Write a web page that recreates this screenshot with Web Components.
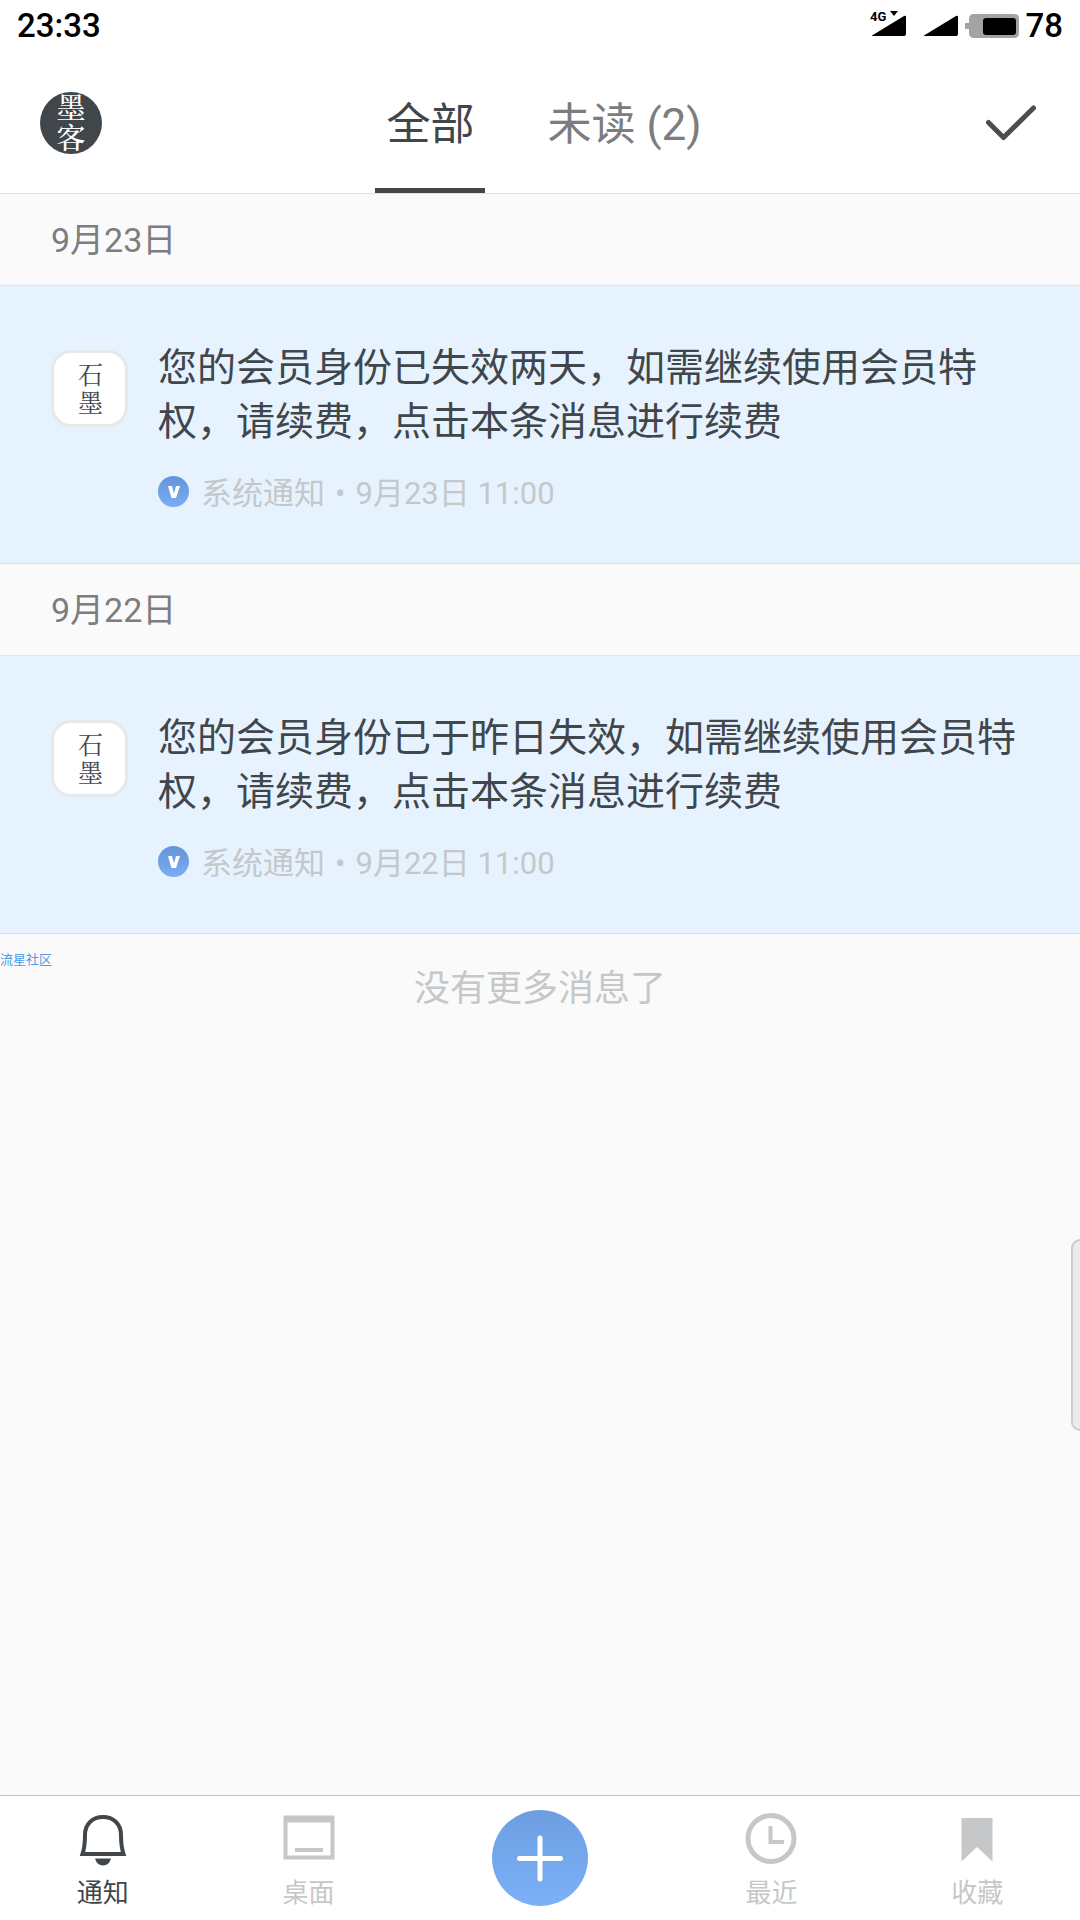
<!DOCTYPE html>
<html lang="zh-CN">
<head>
<meta charset="utf-8">
<meta name="viewport" content="width=device-width, initial-scale=1">
<title>通知</title>
<style>
  html, body { margin: 0; }
  body {
    --ink: #41464b;
    --mute: #7b7d80;
    --faint: #c5c7c9;
    --line: #e1e4e6;
    --serif: "Noto Serif CJK SC", "Liberation Serif", "Noto Sans CJK SC", serif;
    font-family: Roboto, "Noto Sans CJK SC", sans-serif;
    color: var(--ink);
    background: #fafafa;
  }
</style>
</head>
<body>
<notice-app></notice-app>
<script>
const define = (name, html) => {
  const template = document.createElement('template');
  template.innerHTML = html;
  customElements.define(name, class extends HTMLElement {
    constructor() {
      super();
      this.attachShadow({ mode: 'open' }).append(template.content.cloneNode(true));
    }
  });
};

define('status-bar', `
<style>
  :host { display: flex; justify-content: space-between; align-items: center; height: 52px; padding: 0 17px; color: #000; font-size: 33px; font-weight: 500; line-height: 40px; }
  .right { display: flex; align-items: center; gap: 5px; }
  svg { display: block; }
  text { font: 700 13px Roboto, sans-serif; }
</style>
<time>23:33</time>
<div class="right">
  <svg width="150" height="42" viewBox="0 -6 150 42" role="img" aria-label="信号与电量">
    <text x="0" y="10">4G</text>
    <path d="M20 0h8l-4 5z"/>
    <path d="M2 24.500 34 5q2-1 2 1v17q0 2-2 2H3q-2 0-1-.5z"/>
    <path d="M54 24.500 86 5q2-1 2 1v17q0 2-2 2H55q-2 0-1-.5z"/>
    <path fill="#a3a3a3" d="M104 3h40q5 0 5 5v14q0 5-5 5h-40q-5 0-5-5v-4h-4v-6h4V8q0-5 5-5z"/>
    <rect x="113" y="7" width="33" height="17" rx="3"/>
  </svg>
  <span>78</span>
</div>`);

define('user-avatar', `
<style>
  :host { display: block; }
  button { display: flex; flex-direction: column; align-items: center; justify-content: center; width: 62px; height: 62px; padding: 0 0 2px; border: 0; border-radius: 50%; background: #41464b; color: #fff; font: 500 29px/30px var(--serif); }
  span { display: block; width: 1em; }
</style>
<button aria-label="个人中心"><span>墨客</span></button>`);

define('tab-item', `
<style>
  :host { display: flex; color: var(--mute); }
  button { padding: 10px 11px 0; border: 0; border-bottom: 5px solid transparent; background: none; color: inherit; font: inherit; }
  :host([active]) { color: var(--ink); }
  :host([active]) button { border-color: currentColor; }
</style>
<button><slot></slot></button>`);

define('top-bar', `
<style>
  :host { display: flex; justify-content: space-between; align-items: center; height: 141px; padding: 0 40px; border-bottom: 1px solid var(--line); }
  nav { display: flex; align-self: stretch; gap: 51px; font-size: 44px; line-height: 52px; }
  .done { display: block; padding: 0; border: 0; background: none; color: #4a4d52; }
  svg { display: block; }
</style>
<user-avatar></user-avatar>
<nav>
  <tab-item active>全部</tab-item>
  <tab-item>未读 (2)</tab-item>
</nav>
<button class="done" aria-label="全部已读">
  <svg width="54" height="38" viewBox="0 0 54 38" fill="none" stroke="currentColor" stroke-width="5" stroke-linecap="round" stroke-linejoin="round"><path d="M2.500 18.500 17.500 33.500 47.500 4"/></svg>
</button>`);

define('day-heading', `
<style>
  :host { display: block; border-bottom: 1px solid var(--line); }
  h2 { margin: 0; padding: 24px 51px 23px; color: var(--mute); font-size: 34px; font-weight: 400; line-height: 44px; }
</style>
<h2><slot></slot></h2>`);

define('app-mark', `
<style>
  :host { display: flex; flex: none; justify-content: center; align-items: center; box-sizing: border-box; width: 77px; height: 77px; padding: 0 0 4px 2px; border: 3px solid #e6e8ea; border-radius: 20px; background: #fff; font: 25px/28px var(--serif); }
  span { width: 1em; }
</style>
<span>石墨</span>`);

define('notice-item', `
<style>
  :host { display: block; border-bottom: 1px solid #d8e1e8; background: #e6f3ff; }
  a { display: flex; align-items: flex-start; gap: 30px; padding: 55px 51px 49px; color: inherit; text-decoration: none; }
  app-mark { margin-top: 9px; }
  .body { flex: 1; min-width: 0; }
  p { margin: 0; font-size: 39px; line-height: 54px; }
  .meta { display: flex; align-items: flex-start; gap: 12px; margin-top: 25px; color: var(--faint); font-size: 31px; line-height: 40px; }
  svg { display: block; flex: none; margin-top: 2px; }
  ::slotted([slot]) { display: flex; gap: 10px; }
</style>
<a href="#">
  <app-mark></app-mark>
  <div class="body">
    <p><slot></slot></p>
    <div class="meta">
      <svg width="31" height="31" viewBox="0 0 31 31" aria-hidden="true">
        <defs><linearGradient id="g" x2="0" y2="1"><stop stop-color="#6394da"/><stop offset="1" stop-color="#79adf4"/></linearGradient></defs>
        <circle cx="15.500" cy="15.500" r="15.500" fill="url(#g)"/>
        <path fill="#fff" d="M10 10h4l2 7.500 2-7.500h4l-4 12h-4.500z"/>
      </svg>
      <slot name="meta"></slot>
    </div>
  </div>
</a>`);

define('nav-item', `
<style>
  :host { display: block; flex: 4; color: var(--faint); }
  :host([active]) { color: #41464b; }
  a { display: flex; flex-direction: column; align-items: center; gap: 10px; padding-top: 5px; color: inherit; text-decoration: none; font-size: 26px; line-height: 32px; }
  ::slotted(svg) { display: block; }
</style>
<a href="#"><slot name="icon"></slot><slot></slot></a>`);

define('bottom-nav', `
<style>
  :host { display: block; border-top: 1px solid #bfc3c3; background: #fff; }
  nav { display: flex; align-items: center; height: 124px; }
  .add { flex: 5; display: flex; justify-content: center; }
  button { width: 96px; height: 96px; padding: 0; border: 0; border-radius: 50%; background: linear-gradient(#6c9ee0, #7cb0f8); color: #fff; }
  svg { display: block; }
</style>
<nav>
  <nav-item active>
    <svg slot="icon" width="52" height="54" viewBox="0 0 52 54"><path d="M5.500 41C7.500 35 8 31 8 22 8 10.500 16 4 26 4S44 10.500 44 22c0 9 .5 13 2.500 19z" fill="none" stroke="currentColor" stroke-width="4"/><path d="M18 45.500h16q-2 7-8 7t-8-7z" fill="currentColor"/></svg>通知</nav-item>
  <nav-item>
    <svg slot="icon" width="52" height="54" viewBox="0 0 52 54" fill="currentColor"><path fill-rule="evenodd" d="M0.500 2.500h51v44h-51zM4.500 9.500v33h43v-33z"/><path d="M12 35h28v4H12z"/></svg>桌面</nav-item>
  <div class="add"><button aria-label="新建">
    <svg width="96" height="96" viewBox="0 0 96 96" stroke="currentColor" stroke-width="5" stroke-linecap="round"><path d="M48 28v41M27.500 48.500h41"/></svg>
  </button></div>
  <nav-item>
    <svg slot="icon" width="52" height="54" viewBox="0 0 52 54" fill="none" stroke="currentColor"><circle cx="26" cy="25.500" r="23" stroke-width="5"/><path d="M25.500 13v16H39" stroke-width="4"/></svg>最近</nav-item>
  <nav-item>
    <svg slot="icon" width="52" height="54" viewBox="0 0 52 54" fill="currentColor"><path d="M10.500 5h31v43.500L26 34 10.500 48.500z"/></svg>收藏</nav-item>
</nav>`);

define('notice-app', `
<style>
  :host { display: flex; flex-direction: column; min-height: 100vh; position: relative; }
  header { background: #fff; }
  main { flex: 1; }
  .end { margin: 0; padding: 31px 0; color: var(--faint); font-size: 36px; line-height: 48px; text-align: center; }
  .list { position: relative; }
  .mark { position: absolute; left: 0; bottom: -36px; color: #4b9be6; font-size: 13px; line-height: 20px; }
  .handle { position: absolute; right: 0; top: 1239px; box-sizing: border-box; width: 9px; height: 192px; border: 2px solid #cdcdcd; border-right: 0; border-radius: 9px 0 0 9px; background: #ebebeb; }
</style>
<header><status-bar></status-bar><top-bar></top-bar></header>
<main>
  <div class="list">
    <day-heading>9月23日</day-heading>
    <notice-item>您的会员身份已失效两天，如需继续使用会员特权，请续费，点击本条消息进行续费<span slot="meta"><span>系统通知</span><span>•</span><span>9月23日 11:00</span></span></notice-item>
    <day-heading>9月22日</day-heading>
    <notice-item>您的会员身份已于昨日失效，如需继续使用会员特权，请续费，点击本条消息进行续费<span slot="meta"><span>系统通知</span><span>•</span><span>9月22日 11:00</span></span></notice-item>
    <span class="mark">流星社区</span>
  </div>
  <p class="end">没有更多消息了</p>
</main>
<bottom-nav></bottom-nav>
<div class="handle"></div>`);
</script>
</body>
</html>
